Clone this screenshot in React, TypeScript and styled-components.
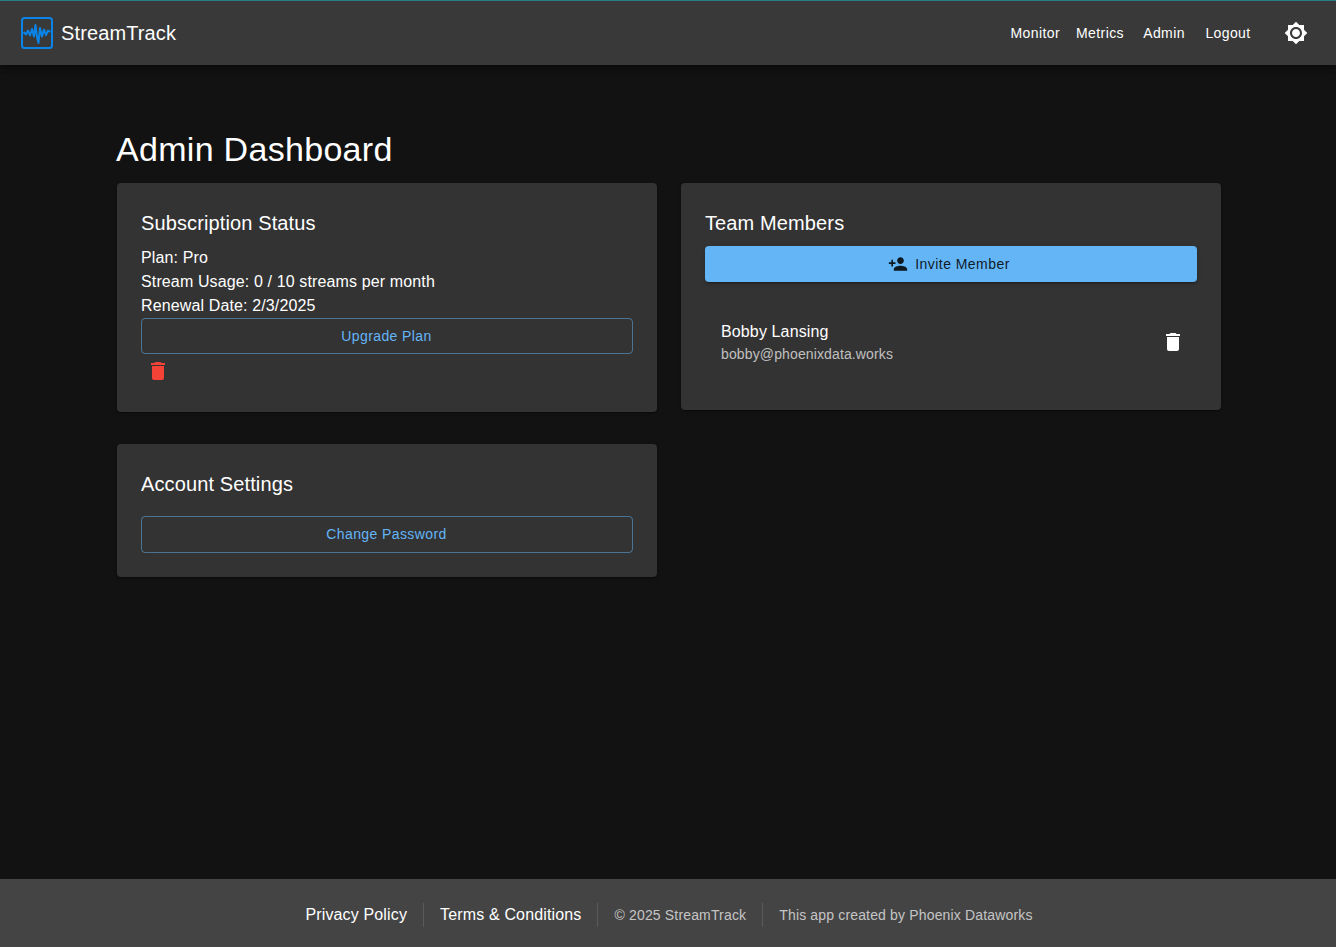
import React from "react";
import styled, { createGlobalStyle } from "styled-components";

const Global = createGlobalStyle`
  html, body { margin: 0; padding: 0; background: #121212; }
  body { font-family: "Liberation Sans", Arial, sans-serif; color: #fff; font-size: 16px; }
  * { box-sizing: border-box; }
`;

const Page = styled.div`
  min-height: 100vh;
  display: flex;
  flex-direction: column;
`;

const Header = styled.header`
  height: 65px;
  flex: none;
  display: flex;
  align-items: center;
  padding: 0 20px 0 21px;
  background: #393939;
  border-top: 1px solid #2a7f86;
  box-shadow: 0 2px 4px -1px rgba(0,0,0,.2), 0 4px 5px rgba(0,0,0,.14), 0 1px 10px rgba(0,0,0,.12);
`;

const Brand = styled.div`
  display: flex;
  align-items: center;
  gap: 8px;
  font-size: 20px;
  line-height: 32px;
  letter-spacing: 0.12px;
  flex: 1;
`;

const Nav = styled.nav`
  display: flex;
  align-items: center;
`;

const NavButton = styled.button`
  min-width: 64px;
  padding: 6px 8px;
  border: 0;
  background: none;
  color: #fff;
  font: 14px/24.5px "Liberation Sans", Arial, sans-serif;
  letter-spacing: 0.4px;
`;

const ThemeToggle = styled.button`
  width: 40px;
  height: 40px;
  margin-left: 16px;
  padding: 8px;
  border: 0;
  background: none;
  color: #fff;
  display: flex;
`;

const Main = styled.main`
  flex: 1;
  width: 100%;
  padding: 63px 115px 0 117px;
`;

const Title = styled.h1`
  margin: 0 0 13px -1px;
  font-size: 34px;
  font-weight: 400;
  line-height: 42px;
  letter-spacing: 0.3px;
`;

const Grid = styled.div`
  display: grid;
  grid-template-columns: 540px 540px;
  column-gap: 24px;
  row-gap: 32px;
  align-items: start;
`;

const Card = styled.section`
  background: #333;
  border-radius: 4px;
  padding: 24px;
  box-shadow: 0 2px 1px -1px rgba(0,0,0,.2), 0 1px 1px rgba(0,0,0,.14), 0 1px 3px rgba(0,0,0,.12);
`;

const CardTitle = styled.h2<{ $mb: number }>`
  margin: 0 0 ${(p) => p.$mb}px;
  font-size: 20px;
  font-weight: 400;
  line-height: 32px;
  letter-spacing: 0.12px;
`;

const Line = styled.p`
  margin: 0;
  font-size: 16px;
  line-height: 24px;
  letter-spacing: 0.13px;
`;

const OutlinedButton = styled.button`
  display: block;
  width: 100%;
  padding: 5px 16px 5px 15px;
  border: 1px solid rgba(100, 181, 246, 0.5);
  border-radius: 4px;
  background: none;
  color: #64b5f6;
  font: 14px/24.5px "Liberation Sans", Arial, sans-serif;
  letter-spacing: 0.4px;
`;

const PrimaryButton = styled.button`
  display: flex;
  align-items: center;
  justify-content: center;
  gap: 7px;
  width: 100%;
  padding: 6px 16px;
  margin-bottom: 16px;
  border: 0;
  border-radius: 4px;
  background: #64b5f6;
  color: rgba(0, 0, 0, 0.87);
  font: 14px/24.5px "Liberation Sans", Arial, sans-serif;
  letter-spacing: 0.45px;
  box-shadow: 0 3px 1px -2px rgba(0,0,0,.2), 0 2px 2px rgba(0,0,0,.14), 0 1px 5px rgba(0,0,0,.12);
`;

const ButtonIcon = styled.span`
  display: flex;
  margin-left: -4px;
`;

const SmallIconButton = styled.button<{ $color: string; $size: number }>`
  display: flex;
  align-items: center;
  justify-content: center;
  width: ${(p) => p.$size}px;
  height: ${(p) => p.$size}px;
  padding: 0;
  border: 0;
  background: none;
  color: ${(p) => p.$color};
  flex: none;
`;

const MemberList = styled.ul`
  list-style: none;
  margin: 0;
  padding: 8px 4px 8px 0;
`;

const Member = styled.li`
  display: flex;
  align-items: center;
  justify-content: space-between;
  padding: 8px 0 8px 16px;
`;

const MemberText = styled.div`
  margin: 6px 0;
`;

const MemberName = styled.div`
  font-size: 16px;
  line-height: 24px;
  letter-spacing: 0.13px;
`;

const MemberEmail = styled.div`
  font-size: 14px;
  line-height: 20px;
  letter-spacing: 0.13px;
  color: rgba(255, 255, 255, 0.7);
`;

const Footer = styled.footer`
  height: 68px;
  flex: none;
  display: flex;
  align-items: center;
  justify-content: center;
  padding: 4px 0 0 2px;
  background: #444;
`;

const FooterLink = styled.a`
  font-size: 16px;
  color: #fff;
  line-height: 24px;
  letter-spacing: 0.15px;
`;

const FooterNote = styled.span`
  font-size: 14px;
  color: rgba(255, 255, 255, 0.7);
  line-height: 20px;
  letter-spacing: 0.16px;
`;

const Divider = styled.span`
  width: 1px;
  height: 24px;
  margin: 0 16px;
  background: rgba(255, 255, 255, 0.12);
`;

const Svg = styled.svg<{ $size: number }>`
  width: ${(p) => p.$size}px;
  height: ${(p) => p.$size}px;
  fill: currentColor;
  display: block;
  flex: none;
`;

const LogoSvg = styled.svg`
  width: 32px;
  height: 32px;
  display: block;
  flex: none;
`;

const TRASH = "M6 19c0 1.1.9 2 2 2h8c1.1 0 2-.9 2-2V7H6zM19 4h-3.5l-1-1h-5l-1 1H5v2h14z";
const PERSON_ADD = "M15 12c2.21 0 4-1.79 4-4s-1.79-4-4-4-4 1.79-4 4 1.79 4 4 4m-9-2V7H4v3H1v2h3v3h2v-3h3v-2zm9 4c-2.67 0-8 1.34-8 4v2h16v-2c0-2.66-5.33-4-8-4";
const BRIGHT = "M20 8.69V4h-4.69L12 .69 8.69 4H4v4.69L.69 12 4 15.31V20h4.69L12 23.31 15.31 20H20v-4.69L23.31 12zM12 18c-3.31 0-6-2.69-6-6s2.69-6 6-6 6 2.69 6 6-2.69 6-6 6m0-10c-2.21 0-4 1.79-4 4s1.79 4 4 4 4-1.79 4-4-1.79-4-4-4";

const Icon = ({ d, size = 24 }: { d: string; size?: number }) => (
  <Svg $size={size} viewBox="0 0 24 24"><path d={d} /></Svg>
);

const Logo = () => (
  <LogoSvg viewBox="0 0 32 32">
    <rect x="1" y="1" width="30" height="30" rx="2.5" fill="none" stroke="#0a84e8" strokeWidth="2" />
    <path
      d="M2.5 15 L5 17.5 L7 13.5 L9 18.5 L11 12 L13 19.5 L14.5 8 L16 20 L17.5 26 L19 11 L21 19.5 L23 12.5 L25 18 L27 13.5 L29.5 15"
      fill="none"
      stroke="#0a84e8"
      strokeWidth="2"
      strokeLinejoin="round"
    />
  </LogoSvg>
);

export default function App() {
  return (
    <Page>
      <Global />
      <Header>
        <Brand>
          <Logo />
          StreamTrack
        </Brand>
        <Nav>
          <NavButton>Monitor</NavButton>
          <NavButton>Metrics</NavButton>
          <NavButton>Admin</NavButton>
          <NavButton>Logout</NavButton>
          <ThemeToggle aria-label="theme"><Icon d={BRIGHT} /></ThemeToggle>
        </Nav>
      </Header>
      <Main>
        <Title>Admin Dashboard</Title>
        <Grid>
          <Card>
            <CardTitle $mb={6.5}>Subscription Status</CardTitle>
            <Line>Plan: Pro</Line>
            <Line>Stream Usage: 0 / 10 streams per month</Line>
            <Line>Renewal Date: 2/3/2025</Line>
            <OutlinedButton>Upgrade Plan</OutlinedButton>
            <SmallIconButton $color="#f44336" $size={34}><Icon d={TRASH} /></SmallIconButton>
          </Card>
          <Card>
            <CardTitle $mb={6.5}>Team Members</CardTitle>
            <PrimaryButton><ButtonIcon><Icon d={PERSON_ADD} size={20} /></ButtonIcon>Invite Member</PrimaryButton>
            <MemberList>
              <Member>
                <MemberText>
                  <MemberName>Bobby Lansing</MemberName>
                  <MemberEmail>bobby@phoenixdata.works</MemberEmail>
                </MemberText>
                <SmallIconButton $color="#fff" $size={40}><Icon d={TRASH} /></SmallIconButton>
              </Member>
            </MemberList>
          </Card>
          <Card>
            <CardTitle $mb={16}>Account Settings</CardTitle>
            <OutlinedButton>Change Password</OutlinedButton>
          </Card>
        </Grid>
      </Main>
      <Footer>
        <FooterLink>Privacy Policy</FooterLink>
        <Divider />
        <FooterLink>Terms &amp; Conditions</FooterLink>
        <Divider />
        <FooterNote>© 2025 StreamTrack</FooterNote>
        <Divider />
        <FooterNote>This app created by Phoenix Dataworks</FooterNote>
      </Footer>
    </Page>
  );
}
